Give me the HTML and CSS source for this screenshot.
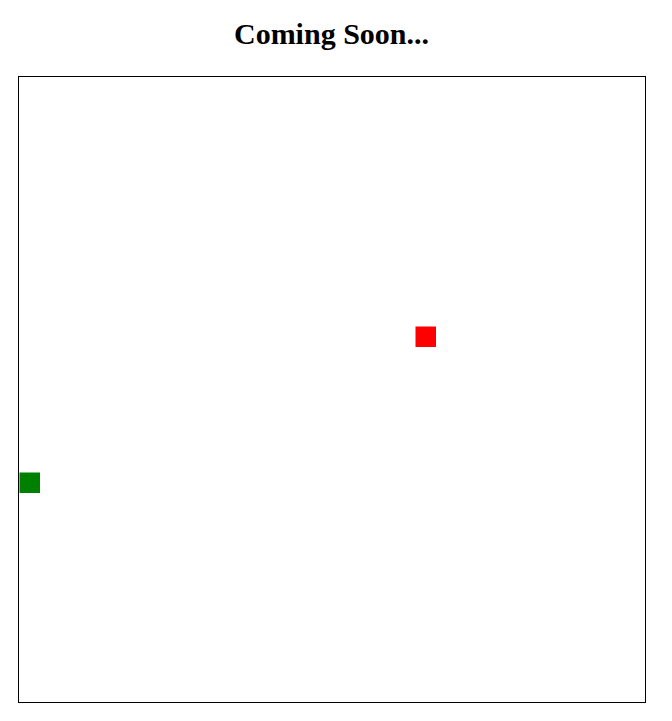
FILE: index.html
```html
<!DOCTYPE html>
<html>
<head>
<meta charset="utf-8">
<title>Coming Soon</title>
<link rel="stylesheet" href="styles.css">
</head>
<body>
<h1 class="title">Coming Soon...</h1>
<div class="board">
  <svg class="field" width="626" height="625" viewBox="0 0 626 625">
    <rect class="food" x="396.5" y="249.5" width="20.5" height="20.5"/>
    <rect class="snake" x="0.5" y="395.5" width="20.5" height="20.5"/>
  </svg>
</div>
</body>
</html>
```
FILE: styles.css
```css
html, body {
  margin: 0;
  padding: 0;
  background: #ffffff;
}
body {
  font-family: "Liberation Serif", "Times New Roman", serif;
  color: #000;
}
.title {
  margin: 0;
  padding: 17px 9px 0 0;
  height: 76px;
  box-sizing: border-box;
  font-size: 30px;
  font-weight: bold;
  text-align: center;
  line-height: 34px;
}
.board {
  margin-left: 18px;
  width: 626px;
  height: 625px;
  border: 1px solid #000;
}
.field {
  display: block;
}
.food {
  fill: #ff0000;
}
.snake {
  fill: #008000;
}
```
